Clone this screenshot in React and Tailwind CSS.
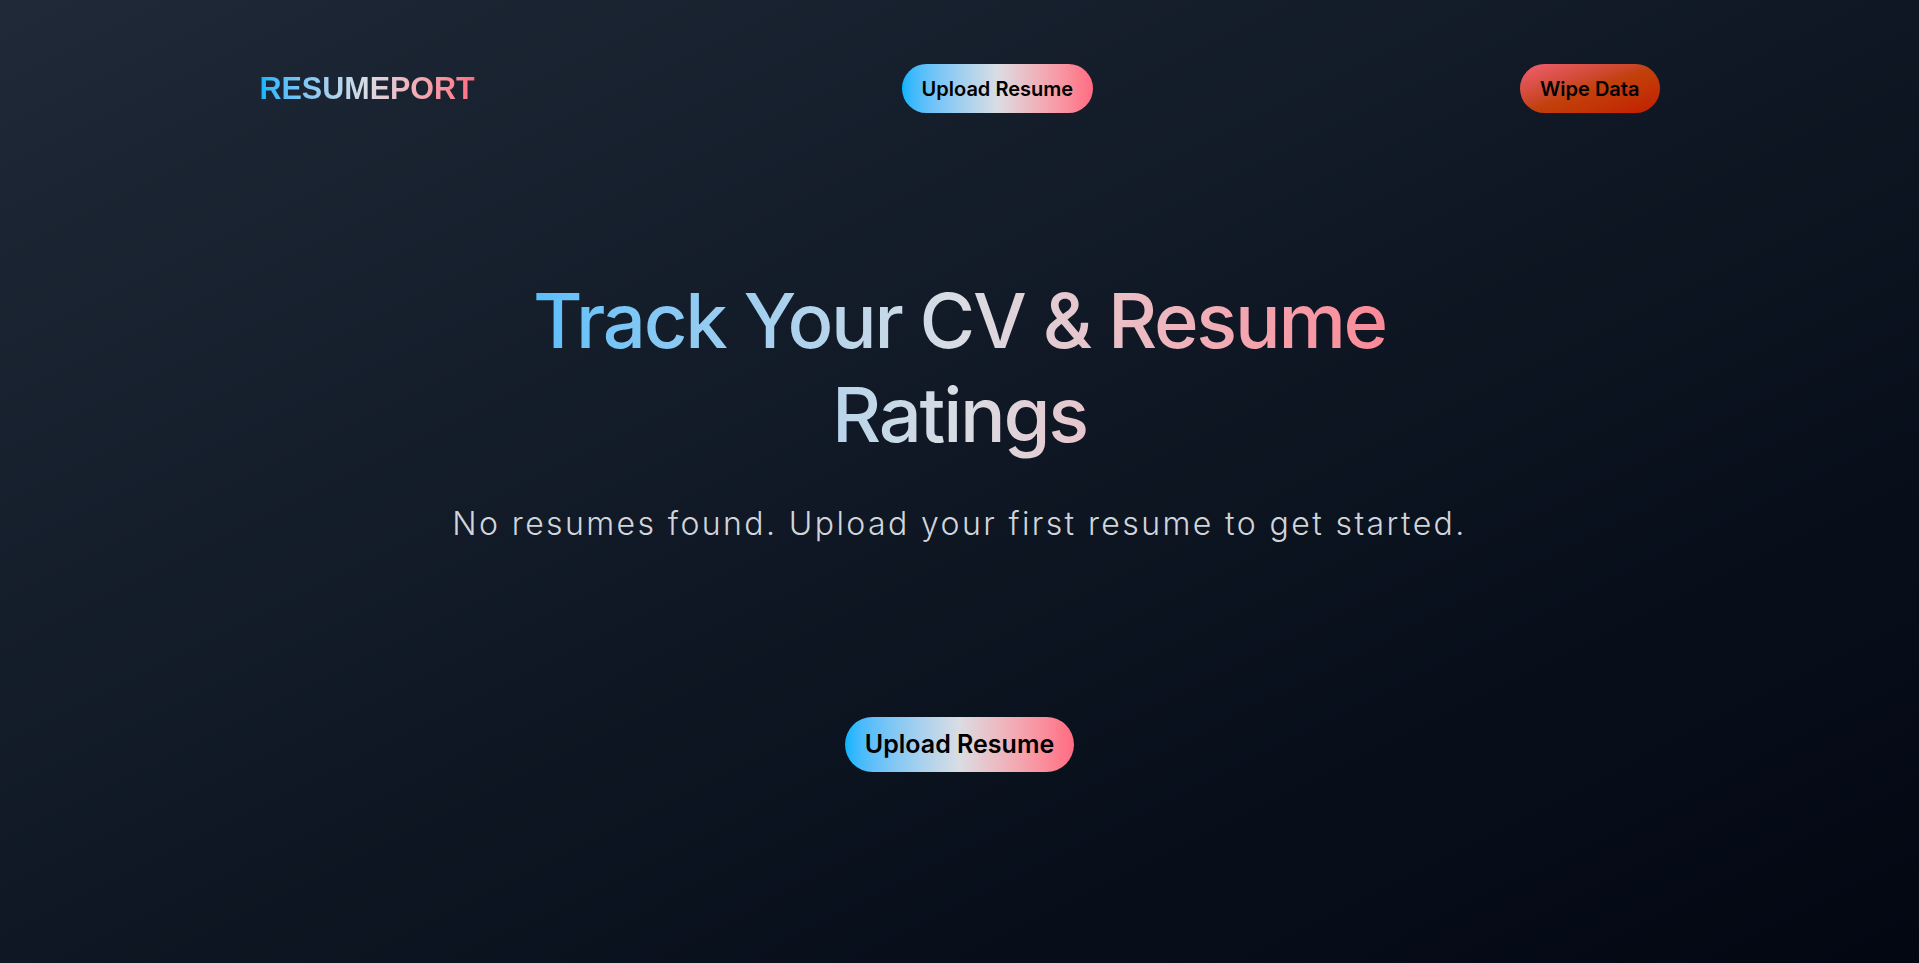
export default function App() {
  return (
    <main className="min-h-screen w-full bg-linear-to-br from-[#1f2937] to-[#030712] font-['Inter',sans-serif]">
      <nav className="max-w-[1400px] mx-auto pt-[64px] flex items-center justify-between">
        <a
          href="#"
          className="font-['Liberation_Sans',Arial,sans-serif] font-bold text-[30.5px] leading-none bg-linear-to-r from-[#00b4ff] via-[#d9dde3] to-[#ff6b82] bg-clip-text text-transparent"
        >
          RESUMEPORT
        </a>
        <button className="h-[49px] px-5 rounded-full text-xl font-semibold text-black bg-linear-to-r from-[#00b4ff] via-[#d9dde3] to-[#ff6b82]">
          Upload Resume
        </button>
        <button className="h-[49px] px-5 rounded-full text-xl font-semibold text-black bg-linear-to-br from-[#f35f6f] via-[#c2410c] to-[#c21a00]">
          Wipe Data
        </button>
      </nav>

      <section className="flex flex-col items-center text-center mt-[160px]">
        <h1 className="max-w-[1100px] w-full text-[76px] leading-[94px] font-medium tracking-[-0.03em] bg-linear-to-r from-[#00b4ff] via-[#d9dde3] to-[#ff6b82] bg-clip-text text-transparent">
          Track Your CV &amp; Resume
          <br />
          Ratings
        </h1>
        <p className="mt-[45px] text-[32px] leading-9 font-light tracking-[0.075em] text-[#d1d5db]">
          No resumes found. Upload your first resume to get started.
        </p>
        <button className="mt-[175px] h-[55px] px-5 rounded-full text-[25px] font-semibold text-black bg-linear-to-r from-[#00b4ff] via-[#d9dde3] to-[#ff6b82]">
          Upload Resume
        </button>
      </section>
    </main>
  );
}
